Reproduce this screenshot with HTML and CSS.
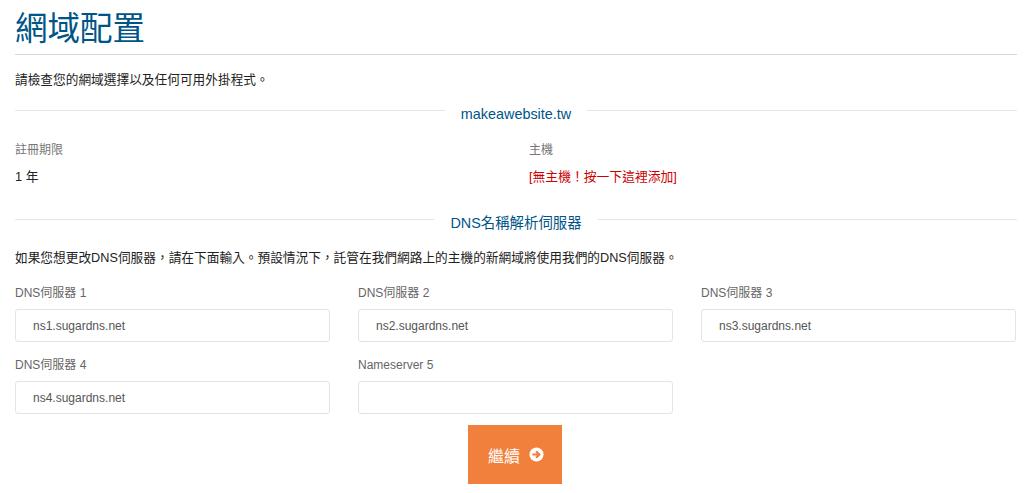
FILE: index.html
```html
<!DOCTYPE html>
<html lang="zh-Hant">
<head>
  <meta charset="UTF-8">
  <meta name="viewport" content="width=device-width, initial-scale=1.0">
  <title>網域配置</title>
  <link rel="stylesheet" href="styles.css">
</head>
<body>
  <div class="container">
    <h1>網域配置</h1>
    <p class="intro">請檢查您的網域選擇以及任何可用外掛程式。</p>

    <div class="sub-heading sub-domain"><span>makeawebsite.tw</span></div>

    <div class="info-row">
      <div>
        <div class="info-label">註冊期限</div>
        <div class="info-value">1 年</div>
      </div>
      <div>
        <div class="info-label">主機</div>
        <div class="info-value"><a href="#" class="no-host">[無主機！按一下這裡添加]</a></div>
      </div>
    </div>

    <div class="sub-heading sub-dns"><span>DNS名稱解析伺服器</span></div>
    <p class="dns-note">如果您想更改DNS伺服器，請在下面輸入。預設情況下，託管在我們網路上的主機的新網域將使用我們的DNS伺服器。</p>

    <div class="ns-grid">
      <div class="field">
        <label for="ns1">DNS伺服器 1</label>
        <input type="text" id="ns1" value="ns1.sugardns.net">
      </div>
      <div class="field">
        <label for="ns2">DNS伺服器 2</label>
        <input type="text" id="ns2" value="ns2.sugardns.net">
      </div>
      <div class="field">
        <label for="ns3">DNS伺服器 3</label>
        <input type="text" id="ns3" value="ns3.sugardns.net">
      </div>
      <div class="field">
        <label for="ns4">DNS伺服器 4</label>
        <input type="text" id="ns4" value="ns4.sugardns.net">
      </div>
      <div class="field">
        <label for="ns5">Nameserver 5</label>
        <input type="text" id="ns5">
      </div>
    </div>

    <div class="actions">
      <button type="button" class="btn-continue">繼續
        <svg class="arrow" viewBox="0 0 16 16" width="15" height="15" aria-hidden="true">
          <circle cx="8" cy="8" r="7.5" fill="#fff"/>
          <path d="M3.6 8h7.2M7.6 4.5 11.1 8l-3.5 3.5" fill="none" stroke="#f0803c" stroke-width="2.2"/>
        </svg>
      </button>
    </div>
  </div>
</body>
</html>
```

FILE: styles.css
```css
body {
  margin: 0;
  font-family: "Liberation Sans", "Noto Sans CJK TC", sans-serif;
  font-size: 12.7px;
  color: #333;
  background: #fff;
}
.container {
  padding: 0 7px 0 15px;
  height: 493px;
  box-sizing: border-box;
  overflow: hidden;
}
h1 {
  margin: 0;
  padding: 9px 0 4px;
  height: 41px;
  font-size: 32.5px;
  line-height: 41px;
  font-weight: 400;
  color: #058;
  border-bottom: 1px solid #d8d8d8;
  box-sizing: content-box;
}
.intro {
  margin: 16px 0 0;
  line-height: 18px;
  color: #222;
}
.sub-heading {
  display: flex;
  align-items: flex-start;
  gap: 16px;
  color: #058;
  font-size: 14.4px;
  line-height: 20px;
}
/* rule sits a little above the middle of the title */
.sub-heading::before,
.sub-heading::after {
  content: "";
  flex: 1;
  margin-top: 6px;
  border-top: 1px solid #e6e6e6;
}
.sub-domain {
  margin-top: 15px;
}
.sub-dns {
  margin-top: 27px;
}
.info-row {
  display: grid;
  grid-template-columns: 488px 488px;
  gap: 26px;
  margin-top: 17px;
}
.info-label {
  color: #777;
  font-size: 12px;
  line-height: 18px;
}
.info-value {
  margin-top: 9px;
  font-size: 12.8px;
  line-height: 18px;
  color: #222;
}
.no-host {
  color: #c00;
  text-decoration: none;
}
.dns-note {
  margin: 16px 0 0;
  line-height: 18px;
  color: #222;
}
.ns-grid {
  display: grid;
  grid-template-columns: repeat(3, 315px);
  column-gap: 28px;
  row-gap: 14px;
  margin-top: 17px;
}
.field label {
  display: block;
  color: #666;
  font-size: 12px;
  line-height: 18px;
  margin-bottom: 7px;
}
.field input {
  display: block;
  width: 100%;
  height: 33px;
  padding: 0 17px;
  box-sizing: border-box;
  border: 1px solid #e3e3e3;
  border-radius: 3px;
  font-family: inherit;
  font-size: 12px;
  color: #555;
  background: #fff;
  outline: none;
}
.actions {
  display: flex;
  justify-content: center;
  margin-top: 11px;
  padding-right: 2px;
}
.btn-continue {
  display: flex;
  align-items: center;
  justify-content: center;
  gap: 9px;
  width: 94px;
  height: 59px;
  padding: 0 0 0 2px;
  border: 0;
  background: #f0803c;
  color: #fff;
  font-family: inherit;
  font-size: 16px;
}
```
